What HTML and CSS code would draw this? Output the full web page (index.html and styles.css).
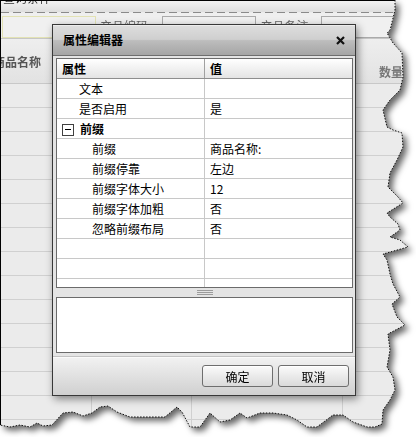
FILE: index.html
```html
<!doctype html>
<html lang="zh-CN">
<head>
	<meta charset="UTF-8">
	<title>属性编辑器</title>
	<link rel="stylesheet" href="styles.css">
</head>
<body>
	<div class="shot">
		<div class="paper">
			<div class="sheet">
				<div class="topbar"><span class="cut">查询条件</span></div>
				<div class="dash"></div>
				<div class="query">
					<span class="field focus"></span>
					<span class="qlabel">产品编码:</span>
					<span class="field"></span>
					<span class="qlabel">产品备注:</span>
					<span class="field wide"></span>
				</div>
				<div class="ghead">
					<span class="gh-name">商品名称</span>
					<span class="gh-qty">数量</span>
				</div>
				<div class="gbody">
					<div class="grow"><span></span><span></span><span></span><span></span></div>
					<div class="grow"><span></span><span></span><span></span><span></span></div>
					<div class="grow"><span></span><span></span><span></span><span></span></div>
					<div class="grow"><span></span><span></span><span></span><span></span></div>
					<div class="grow"><span></span><span></span><span></span><span></span></div>
					<div class="grow"><span></span><span></span><span></span><span></span></div>
					<div class="grow"><span></span><span></span><span></span><span></span></div>
					<div class="grow"><span></span><span></span><span></span><span></span></div>
					<div class="grow"><span></span><span></span><span></span><span></span></div>
					<div class="grow"><span></span><span></span><span></span><span></span></div>
					<div class="grow"><span></span><span></span><span></span><span></span></div>
					<div class="grow"><span></span><span></span><span></span><span></span></div>
					<div class="grow"><span></span><span></span><span></span><span></span></div>
					<div class="grow"><span></span><span></span><span></span><span></span></div>
					<div class="grow"><span></span><span></span><span></span><span></span></div>
				</div>

				<!-- 属性编辑器 弹窗 -->
				<div class="dialog">
					<div class="dlg-title">
						<span>属性编辑器</span>
						<svg class="close" width="9" height="9" viewBox="0 0 9 9">
							<path d="M1 1L8 8M8 1L1 8" stroke="#111" stroke-width="2.2"/>
						</svg>
					</div>
					<div class="dlg-body">
						<div class="pgrid">
							<div class="prow phead">
								<span class="k">属性</span><span class="v">值</span>
							</div>
							<div class="prow">
								<span class="k top">文本</span><span class="v"></span>
							</div>
							<div class="prow">
								<span class="k top">是否启用</span><span class="v">是</span>
							</div>
							<div class="prow">
								<span class="k group"><i class="minus"></i>前缀</span><span class="v"></span>
							</div>
							<div class="prow">
								<span class="k sub">前缀</span><span class="v">商品名称:</span>
							</div>
							<div class="prow">
								<span class="k sub">前缀停靠</span><span class="v">左边</span>
							</div>
							<div class="prow">
								<span class="k sub">前缀字体大小</span><span class="v">12</span>
							</div>
							<div class="prow">
								<span class="k sub">前缀字体加粗</span><span class="v">否</span>
							</div>
							<div class="prow">
								<span class="k sub">忽略前缀布局</span><span class="v">否</span>
							</div>
							<div class="prow"><span class="k"></span><span class="v"></span></div>
							<div class="prow"><span class="k"></span><span class="v"></span></div>
							<div class="prow"><span class="k"></span><span class="v"></span></div>
						</div>
						<div class="splitter"><span class="grip"></span></div>
						<div class="desc"></div>
					</div>
					<div class="dlg-foot">
						<button class="btn">确定</button>
						<button class="btn">取消</button>
					</div>
				</div>
			</div>
		</div>
		<svg class="tear" width="416" height="437" viewBox="0 0 416 437">
			<polyline fill="none" stroke="#111" stroke-width="1" stroke-dasharray="1.5 1.5"
				points="395,0 395,10 390,30 387,33 393,43 402,53 403,77 400,90 390,100 383,110 387,127 393,130 402,133 403,147 397,160 390,173 388,187 398,197 403,203 387,213 390,217 398,224 400,230 390,237 400,240 408,247 383,254 387,260 390,274 393,284 400,297 392,304 397,317 405,325 388,334 390,350 387,367 393,377 395,390 390,400 383,410 382,424 375,427 367,427 353,422 343,415 333,415 317,427 307,427 297,420 287,415 273,413 260,413 247,418 240,413 230,420 220,422 210,413 200,427 190,427 182,412 177,407 165,417 150,417 130,417 117,412 108,406 100,407 92,413 83,416 73,412 63,413 52,425 43,426 37,423 30,427 20,425 10,427 0,425"/>
		</svg>
	</div>
</body>
</html>
```

FILE: styles.css
```css
*{
	margin: 0;
	padding: 0;
	box-sizing: border-box;
}
body{
	width: 416px;
	height: 437px;
	overflow: hidden;
	background: #fff;
	font-family: "Noto Sans CJK SC", "DejaVu Sans", sans-serif;
	font-size: 12px;
	color: #000;
}
.shot{
	position: relative;
	width: 416px;
	height: 437px;
}
.paper{
	filter: drop-shadow(4px 4px 3px rgba(0,0,0,0.6));
}
.sheet{
	position: relative;
	width: 416px;
	height: 437px;
	background: #ebebeb;
	border-top: 1px solid #000;
	border-left: 1px solid #000;
	overflow: hidden;
	clip-path: polygon(0 0, 395px 0, 395px 10px, 390px 30px, 387px 33px, 393px 43px, 402px 53px, 403px 77px, 400px 90px, 390px 100px, 383px 110px, 387px 127px, 393px 130px, 402px 133px, 403px 147px, 397px 160px, 390px 173px, 388px 187px, 398px 197px, 403px 203px, 387px 213px, 390px 217px, 398px 224px, 400px 230px, 390px 237px, 400px 240px, 408px 247px, 383px 254px, 387px 260px, 390px 274px, 393px 284px, 400px 297px, 392px 304px, 397px 317px, 405px 325px, 388px 334px, 390px 350px, 387px 367px, 393px 377px, 395px 390px, 390px 400px, 383px 410px, 382px 424px, 375px 427px, 367px 427px, 353px 422px, 343px 415px, 333px 415px, 317px 427px, 307px 427px, 297px 420px, 287px 415px, 273px 413px, 260px 413px, 247px 418px, 240px 413px, 230px 420px, 220px 422px, 210px 413px, 200px 427px, 190px 427px, 182px 412px, 177px 407px, 165px 417px, 150px 417px, 130px 417px, 117px 412px, 108px 406px, 100px 407px, 92px 413px, 83px 416px, 73px 412px, 63px 413px, 52px 425px, 43px 426px, 37px 423px, 30px 427px, 20px 425px, 10px 427px, 0 425px);
}
.tear{
	position: absolute;
	left: 0;
	top: 0;
	pointer-events: none;
}

/* 背景页面 */
.topbar{
	height: 11px;
	overflow: hidden;
	background: linear-gradient(#f2f2f2, #dedede);
	padding-left: 2px;
}
.topbar .cut{
	display: block;
	margin-top: -10px;
	line-height: 14px;
	color: #333;
}
.dash{
	height: 1px;
	background: repeating-linear-gradient(90deg, #8a8a8a 0 8px, transparent 8px 12px);
}
.query{
	display: flex;
	align-items: flex-start;
	height: 26px;
	padding: 3px 0 0 1px;
	background: #efefef;
	border-bottom: 1px solid #c6c6c6;
}
.field{
	display: block;
	width: 96px;
	height: 22px;
	background: #f0f0f0;
	border: 1px solid #aaa;
}
.field.focus{
	border-color: #e2e2b4;
}
.field + .qlabel + .field{
	width: 97px;
}
.field.wide{
	width: 100px;
}
.qlabel{
	width: 67px;
	padding-left: 4px;
	line-height: 20px;
	color: #666;
}
.qlabel + .field + .qlabel{
	width: 66px;
}
.ghead{
	display: flex;
	height: 45px;
	background: linear-gradient(#eeeeee, #e2e2e2);
	border-bottom: 1px solid #c8c8c8;
	font-weight: bold;
	color: #555;
}
.gh-name{
	margin-left: -8px;
	padding-top: 16px;
	line-height: 14px;
}
.gh-qty{
	margin-left: auto;
	margin-right: 13px;
	padding-top: 26px;
	line-height: 14px;
	color: #777;
}
.grow{
	display: flex;
	height: 24px;
	border-bottom: 1px solid #d0d0d0;
}
.grow span{
	border-right: 1px solid #d0d0d0;
}
.grow span:nth-child(1){ width: 91px; }
.grow span:nth-child(2){ width: 100px; }
.grow span:nth-child(3){ width: 151px; }
.grow span:nth-child(4){ flex: 1; border-right: 0; }

/* 弹窗 */
.dialog{
	position: absolute;
	left: 51px;
	top: 23px;
	width: 304px;
	height: 372px;
	display: flex;
	flex-direction: column;
	background: #e4e4e4;
	border: 1px solid #383838;
	box-shadow: 2px 3px 8px rgba(0,0,0,0.45);
}
.dlg-title{
	display: flex;
	align-items: center;
	justify-content: space-between;
	height: 31px;
	padding: 0 10px;
	border-bottom: 1px solid #6e6e6e;
	background: linear-gradient(#dedede 0%, #cfcfcf 48%, #bdbdbd 52%, #a5a5a5 100%);
	box-shadow: inset 0 1px #ececec;
	font-weight: bold;
}
.dlg-title span{
	line-height: 14px;
}
.dlg-body{
	display: flex;
	flex-direction: column;
	height: 300px;
	padding: 2px 2px 3px 3px;
}
.pgrid{
	height: 230px;
	overflow: hidden;
	background: #fff;
	border: 1px solid #6b6b6b;
}
.prow{
	display: flex;
	height: 20px;
	border-bottom: 1px solid #c8c8c8;
	line-height: 19px;
}
.prow .k{
	width: 148px;
	border-right: 1px solid #c8c8c8;
	padding-left: 5px;
	display: flex;
	align-items: center;
}
.prow .v{
	flex: 1;
	padding-left: 5px;
}
.prow .k.top{ padding-left: 22px; }
.prow .k.sub{ padding-left: 35px; }
.prow .k.group{ font-weight: bold; }
.phead{
	background: linear-gradient(#ffffff, #e4e4e4);
	border-bottom-color: #8e8e8e;
	font-weight: bold;
}
.phead .k{
	border-right-color: #a0a0a0;
}
.minus{
	position: relative;
	display: block;
	width: 12px;
	height: 12px;
	margin: 2px 6px 0 0;
	border: 1px solid #404040;
	background: #fff;
}
.minus::after{
	content: "";
	position: absolute;
	left: 2px;
	top: 4px;
	width: 6px;
	height: 1px;
	background: #000;
}
.splitter{
	display: flex;
	justify-content: center;
	align-items: center;
	height: 9px;
}
.grip{
	display: block;
	width: 16px;
	height: 5px;
	background: repeating-linear-gradient(#9c9c9c 0 1px, transparent 1px 2px);
}
.desc{
	height: 56px;
	background: #fff;
	border: 1px solid #6b6b6b;
}
.dlg-foot{
	display: flex;
	justify-content: flex-end;
	align-items: flex-start;
	gap: 5px;
	height: 39px;
	padding: 8px 6px 0 0;
	border-top: 1px solid #c2c2c2;
	background: linear-gradient(#f2f2f2, #d0d0d0);
	box-shadow: inset 0 1px #fafafa;
}
.btn{
	width: 71px;
	height: 22px;
	font-family: inherit;
	font-size: 12px;
	color: #000;
	border: 1px solid #6e6e6e;
	border-radius: 3px;
	background: linear-gradient(#fbfbfb, #dadada);
	box-shadow: inset 0 1px #fff;
}
```
